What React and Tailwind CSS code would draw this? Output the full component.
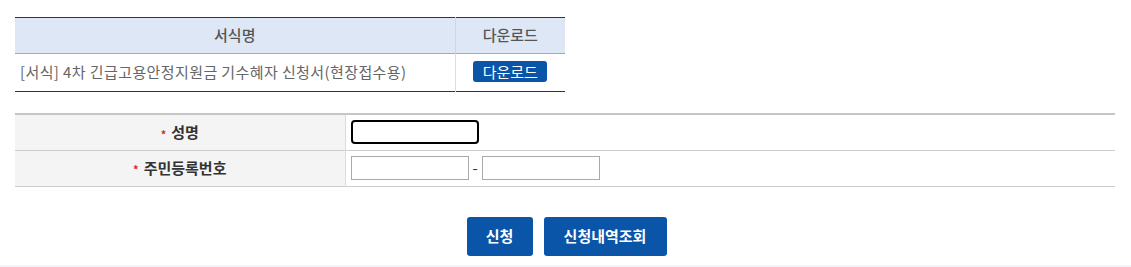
import React from "react";

const Req = () => <span className="text-[#e0262a] text-[11px] mr-[5px] align-middle">*</span>;

export default function App() {
  return (
    <div className="w-[1131px] h-[267px] bg-white font-['Noto_Sans_CJK_KR','Noto_Sans',sans-serif] text-[15px] relative">
      <div className="pl-[15px] pt-[17px]">
        {/* 서식 다운로드 */}
        <table className="w-[550px] border-collapse border-t border-t-[#333] border-b border-b-[#333]">
          <thead>
            <tr className="bg-[#dde7f5] h-[36px] border-b border-b-[#a9a9a9]">
              <th className="font-medium text-[#555] w-[440px] border-r border-r-[#cfd6e0]">서식명</th>
              <th className="font-medium text-[#555]">다운로드</th>
            </tr>
          </thead>
          <tbody>
            <tr className="h-[38px]">
              <td className="pl-[5px] text-[#666] tracking-[0.4px] border-r border-r-[#ddd]">[서식] 4차 긴급고용안정지원금 기수혜자 신청서(현장접수용)</td>
              <td className="text-center">
                <button className="bg-[#0a55a8] text-white w-[74px] h-[21px] rounded-[3px] leading-[21px] text-[15px]">다운로드</button>
              </td>
            </tr>
          </tbody>
        </table>

        {/* 신청 정보 */}
        <table className="mt-[21px] w-[1100px] border-collapse border-t-2 border-t-[#c6c6c6]">
          <tbody>
            <tr className="h-[36px] border-b border-b-[#cccccc]">
              <th className="w-[330px] bg-[#f4f4f4] border-r border-r-[#dcdcdc] font-bold text-[#333]"><Req />성명</th>
              <td className="pl-[5px]">
                <input className="block w-[128px] h-[24px] border-2 border-black rounded-[4px] outline-none" />
              </td>
            </tr>
            <tr className="h-[36px] border-b border-b-[#cccccc]">
              <th className="bg-[#f4f4f4] border-r border-r-[#dcdcdc] font-bold text-[#333]"><Req />주민등록번호</th>
              <td className="pl-[5px]">
                <div className="flex items-center gap-[4px]">
                  <input className="w-[118px] h-[24px] border border-[#aaaaaa] outline-none" />
                  <span className="text-[#333] w-[5px]">-</span>
                  <input className="w-[118px] h-[24px] border border-[#aaaaaa] outline-none" />
                </div>
              </td>
            </tr>
          </tbody>
        </table>
      </div>

      <div className="flex justify-center gap-[11px] mt-[30px] pl-[2px]">
        <button className="w-[66px] h-[39px] bg-[#0a55a8] text-white font-bold rounded-[3px]">신청</button>
        <button className="w-[123px] h-[39px] bg-[#0a55a8] text-white font-bold rounded-[3px]">신청내역조회</button>
      </div>
      <div className="absolute left-0 right-0 bottom-0 h-[2px] bg-[#f3f4f8]" />
    </div>
  );
}
